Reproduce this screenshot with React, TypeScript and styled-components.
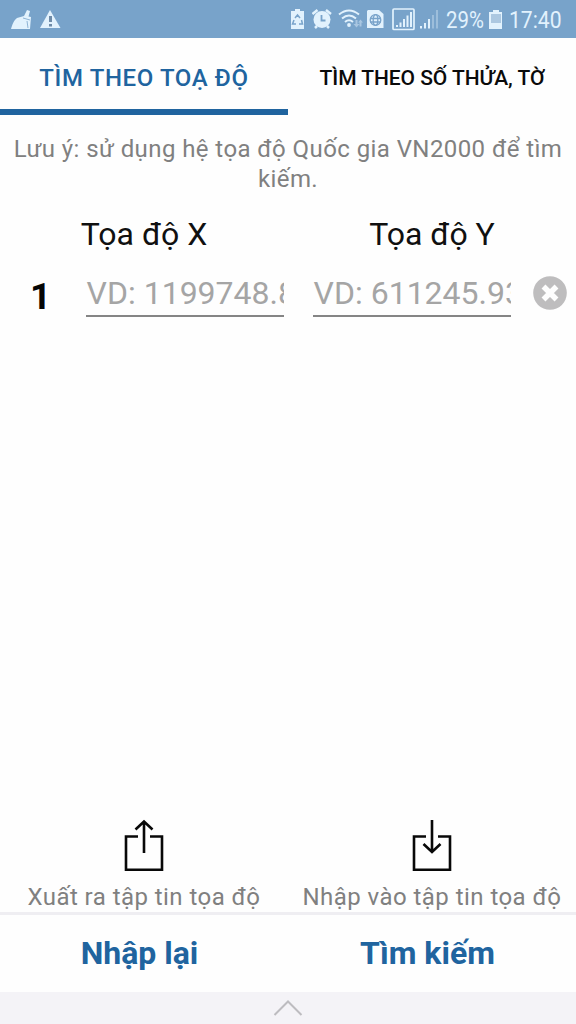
import React from 'react';
import styled, { createGlobalStyle } from 'styled-components';

const GlobalStyle = createGlobalStyle`
  * { box-sizing: border-box; }
  html, body { margin: 0; padding: 0; }
  body { font-family: Roboto, "Noto Sans", sans-serif; background: #fdfdfe; }
  button { font-family: inherit; border: 0; background: none; padding: 0; }
`;

const Screen = styled.div`
  width: 576px;
  height: 1024px;
  display: flex;
  flex-direction: column;
  background: #fefefe;
  overflow: hidden;
`;

const StatusBar = styled.header`
  height: 38px;
  flex: none;
  display: flex;
  align-items: center;
  background: #78a3ca;
  color: #e2f2fd;
`;

const StatusIcon = styled.svg<{ $w: number; $gap: number }>`
  width: ${(p) => p.$w}px;
  height: 38px;
  margin-left: ${(p) => p.$gap}px;
  flex: none;
  display: block;
  fill: currentColor;
`;

const StatusText = styled.span<{ $w: number; $gap: number; $scale: number }>`
  width: ${(p) => p.$w}px;
  margin-left: ${(p) => p.$gap}px;
  flex: none;
  font-size: 24px;
  line-height: 38px;
  height: 38px;
  padding-top: 1px;
  white-space: nowrap;
  transform: scaleX(${(p) => p.$scale});
  transform-origin: left center;
`;

const Tabs = styled.nav`
  height: 77px;
  flex: none;
  display: grid;
  grid-template-columns: 1fr 1fr;
`;

const Tab = styled.button<{ $active?: boolean }>`
  color: ${(p) => (p.$active ? '#20649f' : '#0a0a0a')};
  font-size: ${(p) => (p.$active ? 24 : 21)}px;
  letter-spacing: ${(p) => (p.$active ? 0.62 : -0.05)}px;
  font-weight: 500;
  line-height: 28px;
  white-space: nowrap;
  padding-top: ${(p) => (p.$active ? 8 : 2)}px;
  border-bottom: ${(p) => (p.$active ? '6px solid #20649f' : '0')};
`;

const Note = styled.p`
  margin: 0;
  padding: 19px 8px 0;
  height: 93px;
  text-align: center;
  font-size: 24px;
  line-height: 30px;
  letter-spacing: 0.42px;
  color: #808080;
`;

const Headings = styled.div`
  display: grid;
  grid-template-columns: 1fr 1fr;
  height: 52px;
`;

const Heading = styled.div`
  text-align: center;
  font-size: 32px;
  line-height: 52px;
  color: #101010;
`;

const Row = styled.div`
  display: flex;
  height: 58px;
`;

const Index = styled.div`
  width: 86px;
  padding-left: 30px;
  font-size: 37px;
  line-height: 74px;
  font-weight: 700;
  color: #050505;
`;

const Field = styled.div`
  width: 198px;
  margin-right: 29px;
  height: 57px;
  padding-left: 0.6px;
  border-bottom: 2px solid #858585;
  overflow: hidden;
  white-space: nowrap;
  font-size: 32px;
  line-height: 66px;
  color: #a5a5a5;
`;

const Clear = styled.svg`
  width: 34px;
  height: 34px;
  margin: 16px 0 0 -7px;
`;

const Spacer = styled.div`
  flex: 1;
`;

const Actions = styled.div`
  display: grid;
  grid-template-columns: 1fr 1fr;
  height: 96px;
  border-bottom: 3px solid #efeef2;
`;

const Action = styled.button`
  display: flex;
  flex-direction: column;
  align-items: center;
  color: #808080;
  font-size: 24px;
  line-height: 30px;
  letter-spacing: 0.45px;
  white-space: nowrap;
`;

const ActionIcon = styled.svg`
  width: 40px;
  height: 53px;
  margin-bottom: 10px;
  fill: none;
  stroke: #080808;
  stroke-width: 2.6;
`;

const Buttons = styled.div`
  display: grid;
  grid-template-columns: 1fr 1fr;
  height: 77px;
`;

const MainButton = styled.button`
  padding: 0 9px 0 0;
  color: #20649f;
  font-size: 32px;
  font-weight: 700;
  line-height: 77px;
`;

const NavBar = styled.footer`
  height: 32px;
  background: #f4f3f7;
  display: flex;
  justify-content: center;
`;

const App = () => (
  <>
    <GlobalStyle />
    <Screen>
      <StatusBar>
        <StatusIcon $w={21} $gap={11} viewBox="11 0 21 38">
          <path d="M11 29C12 25 14 20 17 18L24 16L27 10L30 11L28.500 16.500L31 17L30 29Z" />
          <path d="M23 18L30 20M27 21L28 28" stroke="#78a3ca" strokeWidth=".8" fill="none" />
        </StatusIcon>
        <StatusIcon $w={21} $gap={8} viewBox="40 0 21 38">
          <path d="M50 10L60.5 28H40Z" />
          <path d="M49 16h3v6h-3zM49 24h3v2.5h-3z" fill="#6e8ba8" />
        </StatusIcon>
        <StatusIcon $w={13} $gap={230} viewBox="291 0 13 38">
          <path d="M295 9h5v2h4v18h-13V11h4z" />
          <path d="M295 18l2.5-3 2.5 3M301.5 20l1 4h-3.500M296 24h-3.500l1.500-4" fill="none" stroke="#78a3ca" strokeWidth="1.5" />
        </StatusIcon>
        <StatusIcon $w={20} $gap={8} viewBox="312 0 20 38">
          <circle cx="322" cy="19.500" r="8.500" />
          <path d="M312.500 14l5-4M331 14l-5-4M315 28l2-2M329 28l-2-2" stroke="currentColor" strokeWidth="2.500" />
          <path d="M321.500 15v5.500h4" fill="none" stroke="#78a3ca" strokeWidth="1.800" />
        </StatusIcon>
        <StatusIcon $w={25} $gap={6} viewBox="338 0 25 38">
          <g fill="none" stroke="currentColor" strokeWidth="2">
            <path d="M339 14.500Q349 6.500 359 14.500M342 18.500Q349 12.500 356 18.500M345 22Q349 18.500 353 22" />
          </g>
          <circle cx="349" cy="25" r="1.900" />
          <path d="M353.500 24h2v-4h2v4h2l-3 3.500zM358 22.500l2.500-3 2.500 3h-1.500v4h-2v-4z" opacity=".45" />
        </StatusIcon>
        <StatusIcon $w={17} $gap={4} viewBox="367 0 17 38">
          <path d="M368 10h11l4.500 4v14H367V11z" />
          <g fill="none" stroke="#78a3ca" strokeWidth="1.300">
            <circle cx="375.500" cy="20" r="5.300" />
            <ellipse cx="375.500" cy="20" rx="2.300" ry="5.300" />
            <path d="M370 18.500h11M370 22h11" />
          </g>
        </StatusIcon>
        <StatusIcon $w={23} $gap={8} viewBox="392 0 23 38">
          <rect x="393" y="9" width="21" height="20.500" rx="1" fill="none" stroke="currentColor" strokeWidth="1.700" />
          <path d="M396 25h2v2h-2zM399.500 22.500h2V27h-2zM403 19h2v8h-2zM406.500 15.500h2V27h-2zM410 12h2v15h-2z" />
        </StatusIcon>
        <StatusIcon $w={20} $gap={5} viewBox="420 0 20 38">
          <path d="M420 26h2v2.500h-2zM424 23h2v5.500h-2zM428 19h2v9.500h-2z" />
          <path d="M432 15h2v13.500h-2zM436 10h2v18.500h-2z" opacity=".35" />
        </StatusIcon>
        <StatusText $w={39} $gap={6} $scale={0.85}>29%</StatusText>
        <StatusIcon $w={13} $gap={4} viewBox="489 0 13 38">
          <path d="M493 10h6v2h4v17h-14V12h4z" />
          <path d="M491 14h10v9h-10z" fill="#acc8e1" />
        </StatusIcon>
        <StatusText $w={54} $gap={7} $scale={0.88}>17:40</StatusText>
      </StatusBar>
      <Tabs>
        <Tab $active>TÌM THEO TOẠ ĐỘ</Tab>
        <Tab>TÌM THEO SỐ THỬA, TỜ</Tab>
      </Tabs>
      <Note>Lưu ý: sử dụng hệ tọa độ Quốc gia VN2000 để tìm kiếm.</Note>
      <Headings>
        <Heading>Tọa độ X</Heading>
        <Heading>Tọa độ Y</Heading>
      </Headings>
      <Row>
        <Index>1</Index>
        <Field>VD: 1199748.81</Field>
        <Field>VD: 611245.93</Field>
        <Clear viewBox="0 0 34 34">
          <circle cx="17" cy="17" r="16.800" fill="#bebdbe" />
          <path d="M10.500 10.500l13 13M23.500 10.500l-13 13" stroke="#fefefe" strokeWidth="5.500" />
        </Clear>
      </Row>
      <Spacer />
      <Actions>
        <Action>
          <ActionIcon viewBox="0 0 40 53">
            <path d="M14 17.500H2V50.700H38V17.500H26M20 2V34M11.500 10.500L20 2.500L28.500 10.500" />
          </ActionIcon>
          Xuất ra tập tin tọa độ
        </Action>
        <Action>
          <ActionIcon viewBox="0 0 40 53">
            <path d="M14 17.500H2V50.700H38V17.500H26M20 1V33M11.500 25L20 33L28.500 25" />
          </ActionIcon>
          Nhập vào tập tin tọa độ
        </Action>
      </Actions>
      <Buttons>
        <MainButton>Nhập lại</MainButton>
        <MainButton>Tìm kiếm</MainButton>
      </Buttons>
      <NavBar>
        <svg width="30" height="32" viewBox="0 0 30 32" fill="none" stroke="#bdbcc0" strokeWidth="2">
          <path d="M1.500 23L15 9.500L28.500 23" />
        </svg>
      </NavBar>
    </Screen>
  </>
);

export default App;
